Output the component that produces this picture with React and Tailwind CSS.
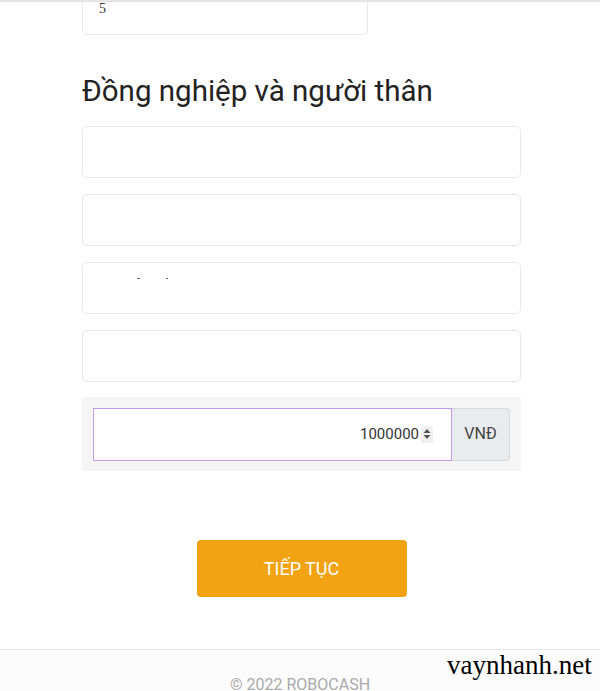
import React from "react";

function Field({ children }) {
  return (
    <div className="relative h-[52px] w-full rounded-[5px] border-[1.5px] border-[#e8e8e8] bg-white">
      {children}
    </div>
  );
}

export default function App() {
  return (
    <div className="flex min-h-[691px] w-[600px] flex-col overflow-hidden bg-white font-['Roboto',sans-serif]">
      <div className="h-[2px] w-full bg-[#e4e4e4]" />
      <div className="w-[439px] self-start ml-[82px]">
        <div className="h-[33px] w-[286px] rounded-b-[5px] border-[1.5px] border-t-0 border-[#e8e8e8] pl-[16px] font-['Liberation_Serif',serif] text-[14px] leading-[14px] text-[#333]">
          5
        </div>

        <h2 className="mt-[39px] text-[29.5px] leading-[34px] text-[#222]">
          Đồng nghiệp và người thân
        </h2>

        <div className="mt-[18px] flex flex-col gap-[16px]">
          <Field />
          <Field />
          <Field>
            <span className="absolute left-[54px] top-[15px] h-[1px] w-[3px] bg-[#8a6e5a]" />
            <span className="absolute left-[83px] top-[15px] h-[1px] w-[2px] bg-[#5a5a6a]" />
          </Field>
          <Field />
        </div>

        <div className="mt-[15px] flex h-[74px] items-center rounded-[3px] bg-[#f5f5f5] px-[11px]">
          <div className="flex h-[53px] flex-1 items-center justify-end border border-[#c39be6] bg-white pr-[18px]">
            <span className="text-[15px] text-[#333]">1000000</span>
            <span className="ml-[2px] flex h-[17px] w-[12px] items-center justify-center bg-[#f0f0f0]">
              <svg width="8" height="12" viewBox="0 0 8 12">
                <path d="M4 1 L7.5 5 H0.5 Z" fill="#555" />
                <path d="M4 11 L7.5 7 H0.5 Z" fill="#555" />
              </svg>
            </span>
          </div>
          <div className="flex h-[53px] w-[58px] items-center justify-center rounded-r-[4px] border border-l-0 border-[#d5d9dd] bg-[#e9ecef] text-[16px] text-[#444]">
            VNĐ
          </div>
        </div>

        <div className="mt-[69px] flex justify-center">
          <button className="h-[57px] w-[210px] rounded-[4px] bg-[#f3a211] text-[18px] text-white">
            TIẾP TỤC
          </button>
        </div>
      </div>

      <div className="mt-[52px] flex h-[42px] justify-center border-t border-[#e6e6e6] bg-[#fcfcfc] pt-[26px]">
        <span className="text-[16px] leading-[18px] text-[#aaa]">
          © 2022 ROBOCASH
        </span>
      </div>
      <span className="absolute left-[447px] top-[649px] font-['Liberation_Serif',serif] text-[27px] leading-[32px] text-black">
        vaynhanh.net
      </span>
    </div>
  );
}
